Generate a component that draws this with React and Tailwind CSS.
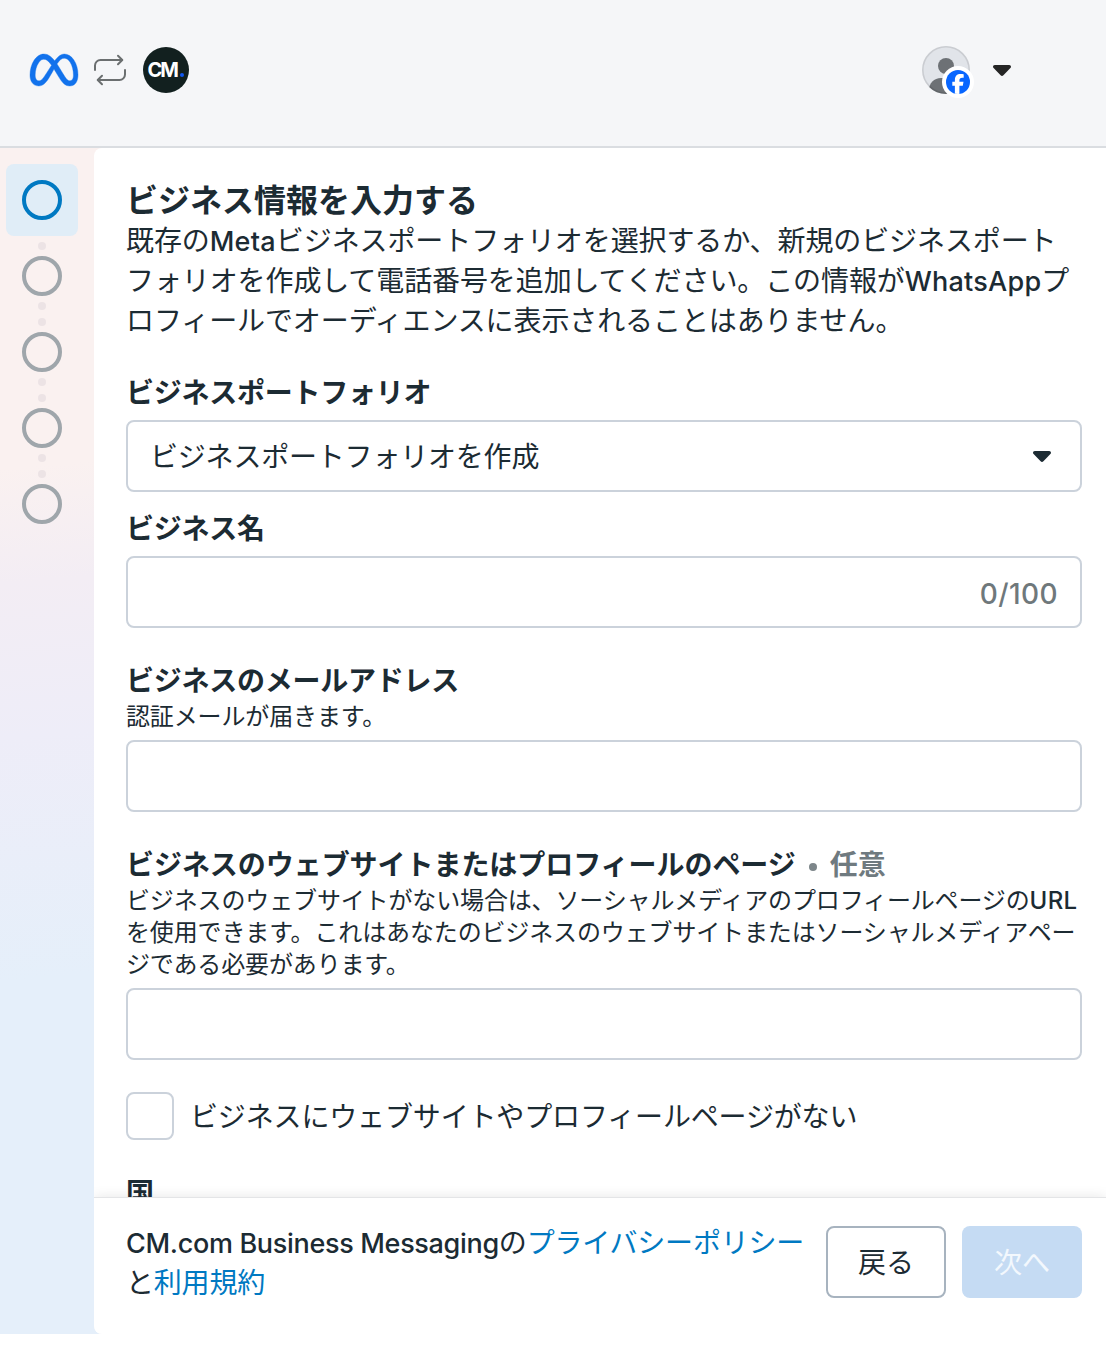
import React, { useState } from 'react';
import { FaFacebookF } from 'react-icons/fa6';
import { SiMeta } from 'react-icons/si';

const STEPS = [1, 2, 3, 4, 5];

// Latin words sit a little heavier than the kana around them
function Latin({ children, className = 'text-[27px] tracking-[0.25px]' }) {
  return (
    <span className={`font-['Inter',sans-serif] font-[450] leading-none ${className}`}>
      {children}
    </span>
  );
}

function Caret({ className }) {
  return (
    <svg viewBox="0 0 18 11" className={`w-[18px] h-[11px] ${className}`} fill="currentColor">
      <path d="M1.8 0h14.4c1.6 0 2.4 1.9 1.2 3l-7 7.2c-.8.9-2 .9-2.8 0L.6 3C-.6 1.900.200 0 1.8 0z" />
    </svg>
  );
}

function Header() {
  return (
    <header className="flex items-start h-[148px] pt-[46px] pl-[30px] pr-[95px] bg-[#f5f6f8] border-b-2 border-[#dadde1]">
      <div className="flex items-center h-12">
        <SiMeta className="w-12 h-12 text-[#1272ec] overflow-visible" stroke="currentColor" strokeWidth="0.2" />
        <svg viewBox="0 0 34 32" className="w-[34px] h-8 ml-[15px]" fill="none" stroke="#6b6f70" strokeWidth="2" strokeLinecap="round" strokeLinejoin="round">
          <path d="M2 16v-4.500a5.500 5.500 0 0 1 5.500-5.500H29" />
          <path d="M25 1.800 29.300 6 25 10.200" />
          <path d="M32 16v4.500a5.500 5.500 0 0 1-5.500 5.500H5" />
          <path d="M9 21.800 4.700 26 9 30.200" />
        </svg>
        <div className="flex items-center justify-center w-[46px] h-[46px] ml-4 rounded-full bg-[#12201f] text-white">
          <span className="font-['Inter',sans-serif] text-[20px] leading-none font-bold tracking-[-2px]">CM</span>
          <span className="w-1 h-1 shrink-0 ml-[3.5px] mt-[10px] rounded-full bg-[#1257f0]" />
        </div>
      </div>

      <div className="flex items-center h-12 ml-auto">
        <div className="relative w-12 h-12">
          <svg viewBox="0 0 48 48" className="w-12 h-12">
            <clipPath id="avatar">
              <circle cx="24" cy="24" r="24" />
            </clipPath>
            <g clipPath="url(#avatar)">
              <rect width="48" height="48" fill="#e1e4e9" />
              <circle cx="24" cy="20" r="8" fill="#6d7175" />
              <path d="M7 48v-4c0-7 5-12 12-12h10c7 0 12 5 12 12v4z" fill="#6d7175" />
            </g>
            <circle cx="24" cy="24" r="23.200" fill="none" stroke="#000" strokeOpacity=".1" strokeWidth="1.600" />
          </svg>
          <div className="absolute left-5 top-5 flex items-end justify-center w-8 h-8 rounded-full bg-white p-1">
            <div className="flex items-end justify-center w-6 h-6 rounded-full bg-[#0866ff] overflow-hidden">
              <FaFacebookF className="w-5 h-5 shrink-0 text-white" />
            </div>
          </div>
        </div>
        <Caret className="ml-[23px] text-[#252525]" />
      </div>
    </header>
  );
}

function Sidebar({ current }) {
  return (
    <nav className="w-[94px] shrink-0 pt-4 pl-1.5">
      {STEPS.map((step, i) => (
        <div key={step} className="w-[72px] flex flex-col items-center">
          {i === 0 ? null : (
            <div className="flex flex-col items-center gap-2 h-9 pt-1.5 pb-1.5">
              {i > 1 && <span className="w-2 h-2 rounded-full bg-[#ece3e5]" />}
              <span className="w-2 h-2 rounded-full bg-[#ece3e5]" />
            </div>
          )}
          <div
            className={
              step === current
                ? 'flex items-center justify-center w-[72px] h-[72px] rounded-lg bg-[#e0edf7]'
                : i === 1
                  ? 'w-10 h-10 -mt-4'
                  : 'w-10 h-10'
            }
          >
            <span
              className={`block w-10 h-10 rounded-full border-4 ${
                step === current ? 'border-[#0079c2]' : 'border-[#9fa6ab]'
              }`}
            />
          </div>
        </div>
      ))}
    </nav>
  );
}

function Field({ label, optional, hint, children }) {
  return (
    <div>
      <label
        className={`block h-10 text-[28px] leading-10 font-bold ${
          optional ? 'tracking-[-0.05px]' : 'tracking-[-0.25px]'
        }`}
      >
        {label}
        {optional && (
          <span className="text-[#6f7a7f]">
            <span className="inline-block w-2 h-2 mx-[13px] align-middle rounded-full bg-[#7d868a]" />
            {optional}
          </span>
        )}
      </label>
      {hint && <p className="text-2xl leading-8 tracking-[-0.14px] whitespace-nowrap">{hint}</p>}
      {children}
    </div>
  );
}

function TextInput({ value, onChange, maxLength }) {
  return (
    <div className="flex items-center h-[72px] mt-[9px] px-[22px] border-2 border-[#cbd2db] rounded-lg bg-white">
      <input
        value={value}
        maxLength={maxLength}
        onChange={(e) => onChange(e.target.value)}
        className="flex-1 min-w-0 text-[28px] outline-none"
      />
      {maxLength && (
        <Latin className="pt-[3px] text-[28px] tracking-[0.4px] text-[#6f787b]">
          {value.length}/{maxLength}
        </Latin>
      )}
    </div>
  );
}

function App() {
  const [name, setName] = useState('');
  const [email, setEmail] = useState('');
  const [website, setWebsite] = useState('');
  const [noWebsite, setNoWebsite] = useState(false);

  return (
    <div className="h-[1366px] overflow-hidden bg-white font-['Noto_Sans_CJK_JP',sans-serif] text-[#1c2b33]">
      <Header />

      <div className="flex h-[1186px] bg-[linear-gradient(175deg,#faf1f0_0%,#faf1f0_25%,#f3edf4_34%,#eeedf8_46%,#e5effa_65%,#e5effa_100%)]">
        <Sidebar current={1} />

        <main className="flex flex-col flex-1 min-w-0 rounded-l-lg bg-white overflow-hidden">
          <div className="flex-1 min-h-0 overflow-hidden pt-[30px] pl-8 pr-6">
            <h1 className="h-[41px] text-[32px] leading-10 font-bold">ビジネス情報を入力する</h1>
            <p className="text-[28px] leading-10 tracking-[-0.1px] whitespace-nowrap">
              既存の<Latin>Meta</Latin>ビジネスポートフォリオを選択するか、新規のビジネスポート
              <br />
              フォリオを作成して電話番号を追加してください。この情報が<Latin>WhatsApp</Latin>プ
              <br />
              ロフィールでオーディエンスに表示されることはありません。
            </p>

            <div className="mt-8">
              <Field label="ビジネスポートフォリオ">
                <button className="flex items-center justify-between w-full h-[72px] mt-[9px] pl-[22px] pr-[29px] pb-0.5 border-2 border-[#cbd2db] rounded-lg text-[28px] tracking-[-0.2px]">
                  ビジネスポートフォリオを作成
                  <Caret className="mt-0.5 text-[#1c2b33]" />
                </button>
              </Field>
            </div>

            <div className="mt-[15px]">
              <Field label="ビジネス名">
                <TextInput value={name} onChange={setName} maxLength={100} />
              </Field>
            </div>

            <div className="mt-[31px]">
              <Field label="ビジネスのメールアドレス" hint="認証メールが届きます。">
                <TextInput value={email} onChange={setEmail} />
              </Field>
            </div>

            <div className="mt-[31px]">
              <Field
                label="ビジネスのウェブサイトまたはプロフィールのページ"
                optional="任意"
                hint={
                  <>
                    ビジネスのウェブサイトがない場合は、ソーシャルメディアのプロフィールページの<Latin className="text-2xl tracking-[0.3px]">URL</Latin>
                    <br />
                    を使用できます。これはあなたのビジネスのウェブサイトまたはソーシャルメディアペー
                    <br />
                    ジである必要があります。
                  </>
                }
              >
                <TextInput value={website} onChange={setWebsite} />
              </Field>
            </div>

            <label className="flex items-center h-12 mt-8">
              <input
                type="checkbox"
                checked={noWebsite}
                onChange={(e) => setNoWebsite(e.target.checked)}
                className="appearance-none w-12 h-12 border-2 border-[#cbd2db] rounded-lg checked:bg-[#0079c2]"
              />
              <span className="ml-4 pb-0.5 text-[28px] leading-10 tracking-[-0.15px]">
                ビジネスにウェブサイトやプロフィールページがない
              </span>
            </label>

            <div className="mt-[31px]">
              <Field label="国" />
            </div>
          </div>

          <footer className="relative flex items-start h-[137px] pt-[23px] pl-8 pr-6 bg-white border-t border-[#e4e5e7] shadow-[0_0_12px_rgba(0,0,0,0.1)]">
            <p className="flex-1 min-w-0 text-[28px] leading-10 tracking-[-0.2px] whitespace-nowrap">
              <Latin className="text-[27px] tracking-[-0.32px]">CM.com Business Messaging</Latin>の
              <a className="text-[#0079c2]">プライバシーポリシー</a>
              <br />と<a className="text-[#0079c2]">利用規約</a>
            </p>
            <button className="w-[120px] h-[72px] mt-[5px] pb-0.5 border-2 border-[#a7b3bf] rounded-lg text-[28px]">
              戻る
            </button>
            <button className="w-[120px] h-[72px] mt-[5px] ml-4 pb-0.5 rounded-lg bg-[#c5dbf3] text-[28px] text-white/80">
              次へ
            </button>
          </footer>
        </main>
      </div>
    </div>
  );
}

export default App;
